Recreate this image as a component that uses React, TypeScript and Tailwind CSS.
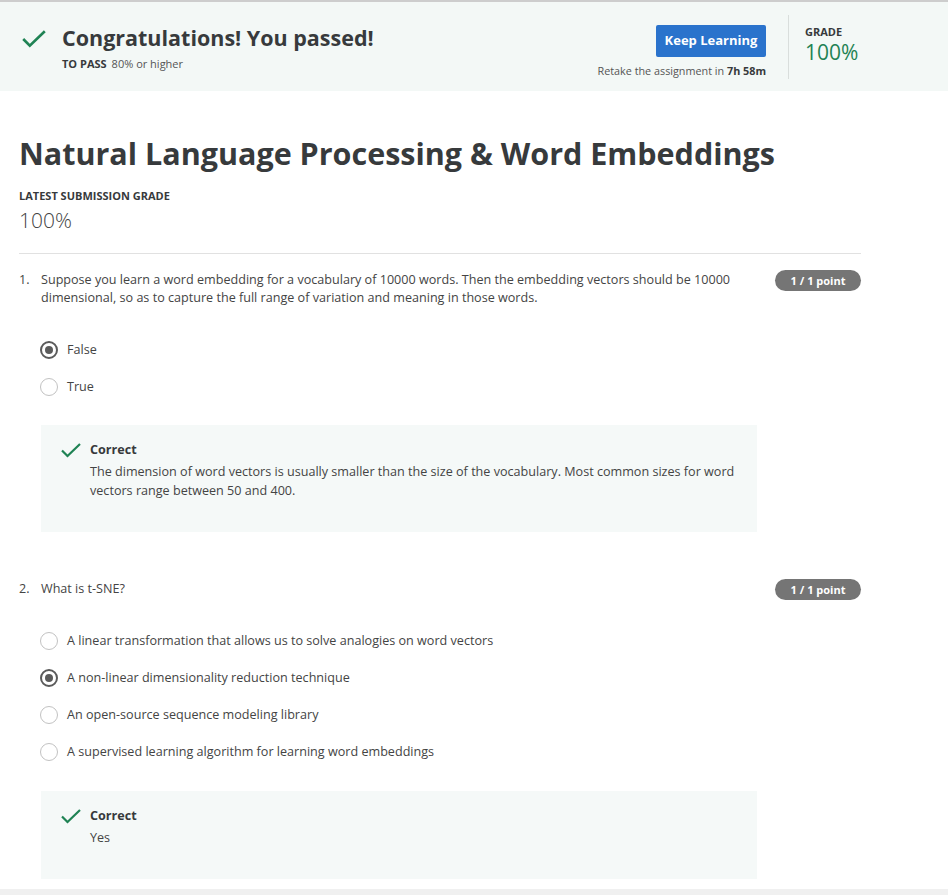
const questions = [
  {
    num: '1.',
    text: 'Suppose you learn a word embedding for a vocabulary of 10000 words. Then the embedding vectors should be 10000 dimensional, so as to capture the full range of variation and meaning in those words.',
    options: ['False', 'True'],
    selected: 0,
    feedback: 'The dimension of word vectors is usually smaller than the size of the vocabulary. Most common sizes for word vectors range between 50 and 400.',
  },
  {
    num: '2.',
    text: 'What is t-SNE?',
    options: [
      'A linear transformation that allows us to solve analogies on word vectors',
      'A non-linear dimensionality reduction technique',
      'An open-source sequence modeling library',
      'A supervised learning algorithm for learning word embeddings',
    ],
    selected: 1,
    feedback: 'Yes',
  },
]

function Check({ className }: { className: string }) {
  return (
    <svg viewBox="0 0 20 15" fill="none" stroke="#1f8354" strokeWidth="2.2" className={className} aria-hidden="true">
      <path d="M1 7.5l5.5 5.5L19 1" />
    </svg>
  )
}

function Radio({ checked }: { checked: boolean }) {
  return checked ? (
    <span className="flex h-[18px] w-[18px] shrink-0 items-center justify-center rounded-full border-2 border-[#5b5b5b]">
      <span className="h-[8px] w-[8px] rounded-full bg-[#5b5b5b]" />
    </span>
  ) : (
    <span className="h-[18px] w-[18px] shrink-0 rounded-full border-[1.5px] border-[#c2c2c2]" />
  )
}

export default function App() {
  return (
    <div className="min-h-[895px] bg-white font-['Open_Sans',sans-serif] text-[#373a3c]">
      {/* Pass banner */}
      <div className="flex h-[91px] items-center border-t-2 border-[#cdcdcd] bg-[#f3f8f6] pl-[22px]">
        <div className="flex flex-1 items-start">
          <Check className="mt-[7px] h-[18px] w-[24px]" />
          <div className="ml-[16px]">
            <h1 className="text-[21.5px] font-bold leading-[30px]">Congratulations! You passed!</h1>
            <div className="mt-[4px] text-[11px] leading-[14px]">
              <span className="font-bold">TO PASS</span>
              <span className="ml-[5px] text-[#555]">80% or higher</span>
            </div>
          </div>
        </div>
        <div className="mt-[10px] flex flex-col items-end">
          <button className="h-[32px] w-[110px] rounded-[2px] bg-[#2a73cc] text-[13px] font-bold text-white">
            Keep Learning
          </button>
          <div className="mt-[7px] text-[10.8px] leading-[14px] text-[#555]">
            Retake the assignment in <span className="font-bold text-[#373a3c]">7h 58m</span>
          </div>
        </div>
        <div className="ml-[22px] h-[64px] w-px bg-[#d9dedc]" />
        <div className="w-[159px] self-start pl-[16px] pt-[23px]">
          <div className="text-[11px] font-bold leading-[14px]">GRADE</div>
          <div className="text-[21px] leading-[26px] text-[#1f8354]">100%</div>
        </div>
      </div>

      <div className="w-[861px] pl-[19px]">
        <h2 className="mt-[42px] text-[30.5px] font-bold leading-[40px]">
          Natural Language Processing &amp; Word Embeddings
        </h2>
        <div className="mt-[16px] text-[11px] font-bold leading-[14px]">LATEST SUBMISSION GRADE</div>
        <div className="mt-[3px] text-[21px] font-light leading-[28px] text-[#444]">100%</div>
        <div className="mt-[19px] h-px bg-[#e1e1e1]" />

        {questions.map((q, qi) => (
          <div key={q.num} className={qi === 0 ? 'mt-[17px]' : 'mt-[48px]'}>
            <div className="flex items-start text-[12.6px] leading-[18px] text-[#444]">
              <span className="w-[22px] shrink-0">{q.num}</span>
              <p className="flex-1 pr-[20px]">{q.text}</p>
              <span className="mt-[-1px] flex h-[21px] w-[86px] shrink-0 items-center justify-center rounded-full bg-[#757575] text-[11px] font-bold text-white">
                1 / 1 point
              </span>
            </div>

            <div className={`${qi === 0 ? 'mt-[34px]' : 'mt-[32px]'} flex flex-col gap-[19px] pl-[21px]`}>
              {q.options.map((o, oi) => (
                <label key={o} className="flex items-center gap-[9px] text-[12.6px] leading-[18px] text-[#444]">
                  <Radio checked={oi === q.selected} />
                  {o}
                </label>
              ))}
            </div>

            <div className={`ml-[22px] mr-[104px] flex items-start bg-[#f5f9f8] pl-[20px] pt-[18px] ${qi === 0 ? 'mt-[29px] pb-[32px]' : 'mt-[30px] pb-[32px]'}`}>
              <Check className="h-[15px] w-[20px] shrink-0" />
              <div className="ml-[9px] mt-[-2px] text-[12.6px]">
                <div className="font-bold leading-[18px]">Correct</div>
                <p className="mt-[3px] pr-[8px] leading-[19px] text-[#444]">{q.feedback}</p>
              </div>
            </div>
          </div>
        ))}
      </div>
      <div className="mt-[10px] h-[7px] bg-[#f0f0f0]" />
    </div>
  )
}
